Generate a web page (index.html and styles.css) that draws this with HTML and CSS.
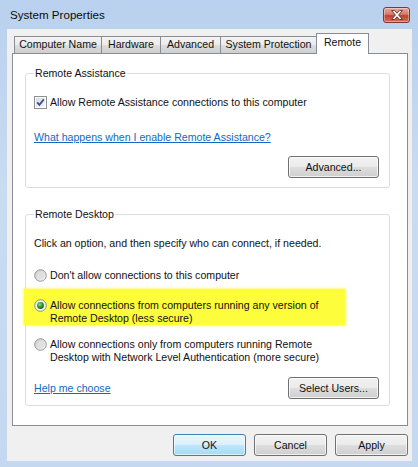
FILE: index.html
```html
<!DOCTYPE html>
<html lang="en">
<head>
    <meta charset="UTF-8">
    <title>System Properties</title>
    <link rel="stylesheet" href="styles.css">
</head>
<body>
    <div class="window">
        <div class="titlebar">
            <span class="title">System Properties</span>
            <div class="close">
                <svg width="14" height="10" viewBox="0 0 14 10">
                    <path d="M1.5 0.5 H4.5 L7 3.2 L9.5 0.5 H12.5 L8.6 5 L12.5 9.5 H9.5 L7 6.8 L4.5 9.5 H1.5 L5.4 5 Z" fill="#fff" stroke="#6b2a20" stroke-width="0.9" stroke-linejoin="round"/>
                </svg>
            </div>
        </div>

        <div class="client">
            <!-- Tab strip -->
            <div class="tabs">
                <div class="tab w-cn">Computer Name</div>
                <div class="tab w-hw">Hardware</div>
                <div class="tab w-adv">Advanced</div>
                <div class="tab w-sp">System Protection</div>
                <div class="tab active w-rm">Remote</div>
            </div>

            <div class="panel">
                <fieldset class="group group-ra">
                    <legend>Remote Assistance</legend>
                    <label class="check">
                        <svg class="box" width="13" height="13" viewBox="0 0 13 13">
                            <defs>
                                <linearGradient id="cbg" x1="0" y1="0" x2="1" y2="1">
                                    <stop offset="0" stop-color="#d8dbe4"/>
                                    <stop offset="1" stop-color="#f7f8fb"/>
                                </linearGradient>
                            </defs>
                            <rect x="0.5" y="0.5" width="12" height="12" fill="#fff" stroke="#8e8f8f"/>
                            <rect x="2" y="2" width="9" height="9" fill="url(#cbg)"/>
                            <path d="M3.2 6.4 L5.4 8.8 L9.8 3.4" fill="none" stroke="#3c4f8c" stroke-width="1.8"/>
                        </svg>
                        Allow Remote Assistance connections to this computer
                    </label>
                    <a class="link link-ra" href="#">What happens when I enable Remote Assistance?</a>
                    <div class="row row-end">
                        <button class="btn btn-wide">Advanced...</button>
                    </div>
                </fieldset>

                <fieldset class="group group-rd">
                    <legend>Remote Desktop</legend>
                    <p class="hint">Click an option, and then specify who can connect, if needed.</p>

                    <label class="option opt-none">
                        <svg class="radio" width="13" height="13" viewBox="0 0 13 13">
                            <defs>
                                <linearGradient id="rbg" x1="0" y1="0" x2="1" y2="1">
                                    <stop offset="0" stop-color="#c9c9c9"/>
                                    <stop offset="1" stop-color="#f6f6f6"/>
                                </linearGradient>
                            </defs>
                            <circle cx="6.5" cy="6.5" r="5.8" fill="url(#rbg)" stroke="#8f9090" stroke-width="0.9"/>
                            <circle cx="6.5" cy="6.5" r="3.6" fill="#e0e0e0"/>
                        </svg>
                        <span>Don't allow connections to this computer</span>
                    </label>

                    <label class="option opt-any marked">
                        <svg class="radio" width="13" height="13" viewBox="0 0 13 13">
                            <defs>
                                <radialGradient id="dot" cx="0.4" cy="0.35" r="0.7">
                                    <stop offset="0" stop-color="#9be28f"/>
                                    <stop offset="0.5" stop-color="#2f9b2c"/>
                                    <stop offset="1" stop-color="#135f15"/>
                                </radialGradient>
                            </defs>
                            <circle cx="6.5" cy="6.5" r="5.8" fill="#f2f2f2" stroke="#7d8a7d" stroke-width="0.9"/>
                            <circle cx="6.5" cy="6.5" r="3.4" fill="url(#dot)"/>
                        </svg>
                        <span>Allow connections from computers running any version of<br>Remote Desktop (less secure)</span>
                    </label>

                    <label class="option opt-nla">
                        <svg class="radio" width="13" height="13" viewBox="0 0 13 13">
                            <circle cx="6.5" cy="6.5" r="5.8" fill="url(#rbg)" stroke="#8f9090" stroke-width="0.9"/>
                            <circle cx="6.5" cy="6.5" r="3.6" fill="#e0e0e0"/>
                        </svg>
                        <span>Allow connections only from computers running Remote<br>Desktop with Network Level Authentication (more secure)</span>
                    </label>

                    <div class="row row-split">
                        <a class="link" href="#">Help me choose</a>
                        <button class="btn btn-wide">Select Users...</button>
                    </div>
                </fieldset>
            </div>

            <!-- Dialog buttons -->
            <div class="footer">
                <button class="btn btn-default">OK</button>
                <button class="btn">Cancel</button>
                <button class="btn">Apply</button>
            </div>
        </div>
    </div>
</body>
</html>
```

FILE: styles.css
```css
/* Basic reset */
* {
    box-sizing: border-box;
    margin: 0;
    padding: 0;
}
body {
    font-family: 'Liberation Sans', Arial, sans-serif;
    font-size: 10.6px;
    line-height: 13px;
    color: #111;
    background: #c6d9ef;
    width: 418px;
    height: 467px;
    overflow: hidden;
}
/* Window frame */
.window {
    width: 418px;
    height: 467px;
    background: linear-gradient(to bottom, #b9d1ee 0%, #c8dbf1 40%, #c4d8f0 100%);
    padding: 0 6px 6px 7px;
    display: flex;
    flex-direction: column;
}
.titlebar {
    height: 29px;
    display: flex;
    align-items: center;
    justify-content: space-between;
    padding: 0 2px 0 3px;
}
.title {
    font-size: 11.6px;
    color: #0b0b0b;
    margin-top: -1px;
}
.close {
    width: 27px;
    height: 16px;
    margin-top: 1px;
    border: 1px solid #7a3b33;
    border-radius: 3px;
    background: linear-gradient(to bottom, #e8a99c 0%, #d57b6a 45%, #c0412f 55%, #d5705c 100%);
    box-shadow: inset 0 0 0 1px rgba(255, 255, 255, 0.35);
    display: flex;
    align-items: center;
    justify-content: center;
}
.client {
    flex: 1;
    background: #f0f0f0;
    padding: 4px 0 0 5px;
    display: flex;
    flex-direction: column;
}
/* Tabs */
.tabs {
    display: flex;
    align-items: flex-end;
    height: 21px;
    padding-left: 2px;
}
.tab {
    height: 17px;
    margin-bottom: 1px;
    margin-left: -1px;
    border: 1px solid #898c95;
    border-bottom: none;
    background: linear-gradient(to bottom, #f3f3f3 0%, #ebebeb 50%, #dddddd 51%, #cfcfcf 100%);
    text-align: center;
    line-height: 15px;
    white-space: nowrap;
}
.tab:first-child {
    margin-left: 0;
}
.tab.active {
    position: relative;
    z-index: 1;
    height: 21px;
    margin-bottom: 0;
    background: #fff;
    line-height: 17px;
}
.w-cn { width: 88px; }
.w-hw { width: 60px; }
.w-adv { width: 61px; }
.w-sp { width: 97px; }
.w-rm { width: 53px; }
/* Tab page */
.panel {
    width: 396px;
    height: 373px;
    margin-top: -1px;
    background: #fff;
    border: 1px solid #898c95;
    padding: 13px 17px 0 12px;
}
.group {
    border: 1px solid #d5dfe5;
    border-radius: 3px;
    padding: 0 10px 9px 8px;
    display: flex;
    flex-direction: column;
    align-items: flex-start;
}
.group legend {
    padding: 0 1px;
    margin-left: 0;
}
.group-rd {
    margin-top: 20px;
    padding-bottom: 6px;
}
.check {
    display: flex;
    align-items: center;
    gap: 3px;
    margin-top: 16px;
}
.link {
    color: #1467c2;
    text-decoration: underline;
}
.link-ra {
    margin-top: 22px;
}
.row {
    width: 100%;
    display: flex;
    align-items: center;
}
.row-end {
    justify-content: flex-end;
    margin-top: 12px;
}
.row-split {
    justify-content: space-between;
    margin-top: 13px;
}
.hint {
    margin-top: 16px;
}
.option {
    display: flex;
    align-items: flex-start;
    gap: 3px;
}
.option .radio {
    flex: none;
}
.opt-none {
    margin-top: 19px;
}
.opt-any {
    margin-top: 7px;
}
.opt-nla {
    margin-top: 13px;
}
/* highlighter mark over the chosen option */
.marked {
    width: 321px;
    margin-left: -10px;
    padding: 10px 0 0 10px;
    background: #fdfd3c;
    box-shadow: 0 0 2px 1px rgba(253, 253, 60, 0.7);
}
/* Buttons */
.btn {
    font-family: inherit;
    font-size: inherit;
    color: #111;
    width: 73px;
    height: 22px;
    border: 1px solid #707070;
    border-radius: 3px;
    background: linear-gradient(to bottom, #f2f2f2 0%, #ebebeb 48%, #dddddd 52%, #cfcfcf 100%);
    box-shadow: inset 0 0 0 1px rgba(255, 255, 255, 0.7);
}
.btn-wide {
    width: 91px;
}
.btn-default {
    border-color: #3c7fb1;
    background: linear-gradient(to bottom, #eaf6fd 0%, #d9f0fc 48%, #bee6fd 52%, #a7d9f5 100%);
    box-shadow: inset 0 0 0 1px rgba(255, 255, 255, 0.6);
}
.footer {
    display: flex;
    justify-content: flex-end;
    gap: 8px;
    margin-top: 8px;
    padding-right: 4px;
}
```
